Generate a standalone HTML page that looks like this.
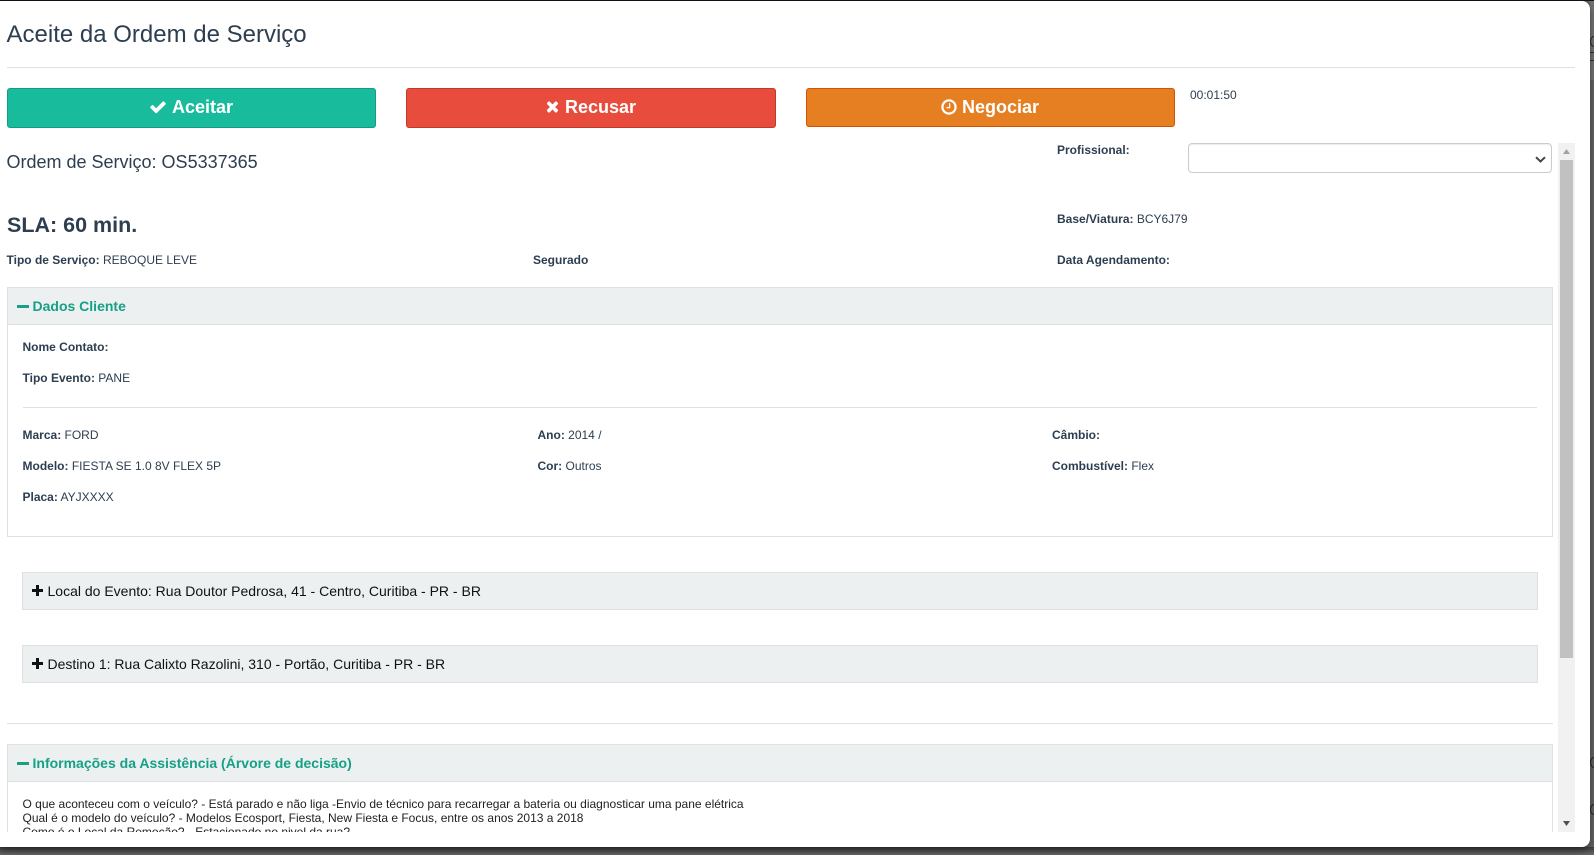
<!DOCTYPE html>
<html lang="pt">
<head>
<meta charset="utf-8">
<title>Aceite da Ordem de Serviço</title>
<style>
html,body{margin:0;padding:0;width:1594px;height:855px;overflow:hidden;background:#666;}
body{position:relative;font-family:"Liberation Sans",Arial,sans-serif;color:#2c3e50;}
*{box-sizing:border-box;}
.abs{position:absolute;}
.t{position:absolute;white-space:nowrap;font-size:12px;line-height:14px;color:#2c3e50;}
.t b{font-weight:700;}
#strip{position:absolute;left:1590px;top:0;width:4px;height:855px;overflow:hidden;background:#666;}
#modal{position:absolute;left:0;top:1px;width:1590px;height:846px;background:#fff;border-radius:0 8px 8px 0;box-shadow:0 3px 9px rgba(0,0,0,.5);overflow:hidden;}
#view{position:absolute;left:0;top:0;width:1590px;height:831px;overflow:hidden;}
.hr{position:absolute;height:1px;background:#e0e0e0;}
.btn{position:absolute;height:40px;border-radius:3px;border:1px solid;color:#fff;}
.btn span{position:absolute;top:8px;font-size:18px;line-height:20px;font-weight:700;white-space:nowrap;}
.btn svg{position:absolute;fill:#fff;}
.ph{position:absolute;background:#ecf0f1;border:1px solid #e0e0e0;}
.pb{position:absolute;border:1px solid #e0e0e0;background:#fff;}
.green{position:absolute;font-size:14px;line-height:16px;font-weight:700;color:#16a085;white-space:nowrap;}
.dark{position:absolute;font-size:14px;line-height:16px;color:#111;white-space:nowrap;}
.minus{position:absolute;width:12px;height:3px;background:#16a085;}
.plus{position:absolute;width:11px;height:11px;}
.plus:before{content:"";position:absolute;left:0;top:4px;width:11px;height:3px;background:#111;}
.plus:after{content:"";position:absolute;left:4px;top:0;width:3px;height:11px;background:#111;}
</style>
</head>
<body>
<div id="strip">
  <div class="abs" style="left:0;top:0;width:4px;height:80px;background:#777"></div>
  <div class="abs" style="left:0;top:36px;width:8px;height:11px;border:1px solid #1f2a33;border-radius:50%"></div>
  <div class="abs" style="left:0;top:52px;width:4px;height:1px;background:#2c3e50"></div>
  <div class="abs" style="left:0;top:60px;width:4px;height:1px;background:#2c3e50"></div>
  <div class="abs" style="left:0;top:757px;width:8px;height:11px;border:1px solid #1f2a33;border-radius:50%"></div>
  <div class="abs" style="left:0;top:804px;width:8px;height:11px;border:1px solid #1f2a33;border-radius:50%"></div>
</div>
<div class="abs" style="left:0;top:0;width:1594px;height:1px;background:#0d1520"></div>
<div class="abs" style="left:0;top:847px;width:1594px;height:8px;background:linear-gradient(#404040,#6a6a6a)"></div>

<div id="modal">
<div id="view">
  <div class="abs" style="left:6.500px;top:20px;font-size:24px;line-height:28px;color:#2c3e50;white-space:nowrap">Aceite da Ordem de Serviço</div>
  <div class="hr" style="left:7px;top:66px;width:1568px"></div>

  <div class="btn" style="left:7px;top:87px;width:369px;background:#18bc9c;border-color:#149c82">
    <svg style="left:141px;top:9px" width="18" height="18" viewBox="0 0 1792 1792"><path d="M1671 566q0 40-28 68l-724 724-136 136q-28 28-68 28t-68-28l-136-136-362-362q-28-28-28-68t28-68l136-136q28-28 68-28t68 28l294 295 656-657q28-28 68-28t68 28l136 136q28 28 28 68z"/></svg>
    <span style="left:164px">Aceitar</span>
  </div>
  <div class="btn" style="left:406px;top:87px;width:370px;background:#e74c3c;border-color:#c0392b">
    <svg style="left:137px;top:10px" width="17" height="17" viewBox="0 0 1408 1792"><path d="M1298 1202q0 40-28 68l-136 136q-28 28-68 28t-68-28l-294-294-294 294q-28 28-68 28t-68-28l-136-136q-28-28-28-68t28-68l294-294-294-294q-28-28-28-68t28-68l136-136q28-28 68-28t68 28l294 294 294-294q28-28 68-28t68 28l136 136q28 28 28 68t-28 68l-294 294 294 294q28 28 28 68z"/></svg>
    <span style="left:158px">Recusar</span>
  </div>
  <div class="btn" style="left:806px;top:87px;width:369px;height:39px;background:#e67e22;border-color:#d35400">
    <svg style="left:133px;top:9px" width="18" height="18" viewBox="0 0 1792 1792"><path d="M1024 544v448q0 14-9 23t-23 9h-320q-14 0-23-9t-9-23v-64q0-14 9-23t23-9h224v-352q0-14 9-23t23-9h64q14 0 23 9t9 23zm416 352q0-148-73-273t-198-198-273-73-273 73-198 198-73 273 73 273 198 198 273 73 273-73 198-198 73-273zm224 0q0 209-103 385.500t-279.500 279.500-385.500 103-385.500-103-279.500-279.500-103-385.500 103-385.500 279.500-279.500 385.500-103 385.500 103 279.500 279.500 103 385.500z"/></svg>
    <span style="left:155px">Negociar</span>
  </div>
  <div class="t" style="left:1190px;top:87px">00:01:50</div>

  <div class="abs" style="left:6.500px;top:151px;font-size:18px;line-height:20px;white-space:nowrap">Ordem de Serviço: OS5337365</div>
  <div class="t" style="left:1057px;top:142px"><b>Profissional:</b></div>
  <div class="abs" style="left:1188px;top:142px;width:364px;height:30px;border:1px solid #ccc;border-radius:4px;background:#fff;box-shadow:inset 0 1px 1px rgba(0,0,0,.075)">
    <svg class="abs" style="left:346px;top:12px" width="11" height="7" viewBox="0 0 11 7"><path d="M1 1.200L5.500 5.500 10 1.200" fill="none" stroke="#444" stroke-width="2"/></svg>
  </div>

  <div class="abs" style="left:7px;top:211px;font-size:21.500px;line-height:26px;font-weight:700;white-space:nowrap">SLA: 60 min.</div>
  <div class="t" style="left:1057px;top:211px"><b>Base/Viatura:</b> BCY6J79</div>
  <div class="t" style="left:6.500px;top:252px"><b>Tipo de Serviço:</b> REBOQUE LEVE</div>
  <div class="t" style="left:533px;top:252px"><b>Segurado</b></div>
  <div class="t" style="left:1057px;top:252px"><b>Data Agendamento:</b></div>

  <!-- Dados cliente -->
  <div class="pb" style="left:7px;top:286px;width:1546px;height:250px"></div>
  <div class="ph" style="left:7px;top:286px;width:1546px;height:38px"></div>
  <div class="minus" style="left:17px;top:304px"></div>
  <div class="green" style="left:32.500px;top:297px">Dados Cliente</div>
  <div class="t" style="left:22.500px;top:339px"><b>Nome Contato:</b></div>
  <div class="t" style="left:22.500px;top:370px"><b>Tipo Evento:</b> PANE</div>
  <div class="hr" style="left:22.500px;top:406px;width:1514px"></div>
  <div class="t" style="left:22.500px;top:427px"><b>Marca:</b> FORD</div>
  <div class="t" style="left:537.500px;top:427px"><b>Ano:</b> 2014 /</div>
  <div class="t" style="left:1052px;top:427px"><b>Câmbio:</b></div>
  <div class="t" style="left:22.500px;top:458px"><b>Modelo:</b> FIESTA SE 1.0 8V FLEX 5P</div>
  <div class="t" style="left:537.500px;top:458px"><b>Cor:</b> Outros</div>
  <div class="t" style="left:1052px;top:458px"><b>Combustível:</b> Flex</div>
  <div class="t" style="left:22.500px;top:489px"><b>Placa:</b> AYJXXXX</div>

  <!-- Local -->
  <div class="ph" style="left:22px;top:571px;width:1516px;height:38px"></div>
  <div class="plus" style="left:32px;top:584px"></div>
  <div class="dark" style="left:47.500px;top:582px">Local do Evento: Rua Doutor Pedrosa, 41 - Centro, Curitiba - PR - BR</div>

  <!-- Destino -->
  <div class="ph" style="left:22px;top:644px;width:1516px;height:38px"></div>
  <div class="plus" style="left:32px;top:657px"></div>
  <div class="dark" style="left:47.500px;top:655px">Destino 1: Rua Calixto Razolini, 310 - Portão, Curitiba - PR - BR</div>

  <div class="hr" style="left:7px;top:722px;width:1546px"></div>

  <!-- Info -->
  <div class="pb" style="left:7px;top:743px;width:1546px;height:88px;border-bottom:none"></div>
  <div class="ph" style="left:7px;top:743px;width:1546px;height:38px"></div>
  <div class="minus" style="left:17px;top:761px"></div>
  <div class="green" style="left:32.500px;top:754px">Informações da Assistência (Árvore de decisão)</div>
  <div class="t" style="left:22.500px;top:796px;color:#222">O que aconteceu com o veículo? - Está parado e não liga -Envio de técnico para recarregar a bateria ou diagnosticar uma pane elétrica</div>
  <div class="t" style="left:22.500px;top:810px;color:#222">Qual é o modelo do veículo? - Modelos Ecosport, Fiesta, New Fiesta e Focus, entre os anos 2013 a 2018</div>
  <div class="t" style="left:22.500px;top:824px;height:7px;overflow:hidden;color:#222">Como é o Local da Remoção? - Estacionado no nivel da rua?</div>

  <!-- scrollbar -->
  <div class="abs" style="left:1558px;top:142px;width:17px;height:689px;background:#f1f1f1"></div>
  <div class="abs" style="left:1560px;top:159px;width:13px;height:498px;background:#c1c1c1"></div>
  <svg class="abs" style="left:1558px;top:142px" width="17" height="17" viewBox="0 0 17 17"><path d="M8.500 6L12 11H5z" fill="#a3a3a3"/></svg>
  <svg class="abs" style="left:1558px;top:814px" width="17" height="17" viewBox="0 0 17 17"><path d="M8.500 11L12 6H5z" fill="#505050"/></svg>
</div>
</div>
</body>
</html>
